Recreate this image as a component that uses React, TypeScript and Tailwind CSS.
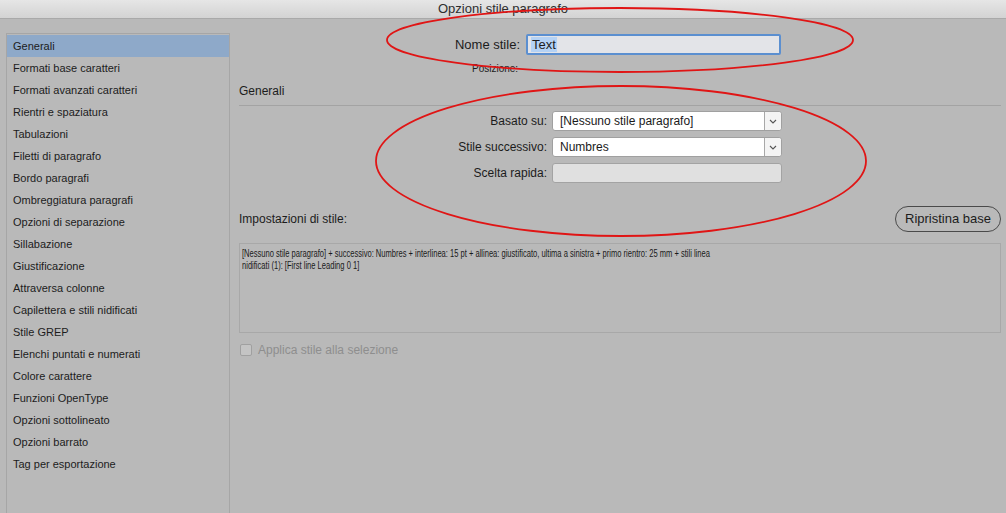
import React from "react";

const sections = [
  "Generali",
  "Formati base caratteri",
  "Formati avanzati caratteri",
  "Rientri e spaziatura",
  "Tabulazioni",
  "Filetti di paragrafo",
  "Bordo paragrafi",
  "Ombreggiatura paragrafi",
  "Opzioni di separazione",
  "Sillabazione",
  "Giustificazione",
  "Attraversa colonne",
  "Capilettera e stili nidificati",
  "Stile GREP",
  "Elenchi puntati e numerati",
  "Colore carattere",
  "Funzioni OpenType",
  "Opzioni sottolineato",
  "Opzioni barrato",
  "Tag per esportazione",
];

function Chevron() {
  return (
    <svg width="8" height="5" viewBox="0 0 8 5" className="text-[#555]">
      <path d="M1 1l3 3 3-3" fill="none" stroke="currentColor" strokeWidth="1.1" />
    </svg>
  );
}

function SelectBox({ value }: { value: string }) {
  return (
    <div className="flex h-[20px] w-[230px] items-stretch rounded-[3px] border border-[#a0a0a0] bg-white">
      <div className="flex flex-1 items-center pl-[7px] text-[12px] text-[#1a1a1a]">{value}</div>
      <div className="flex w-[17px] items-center justify-center rounded-r-[3px] border-l border-[#a8a8a8] bg-[#f4f4f4]">
        <Chevron />
      </div>
    </div>
  );
}

export default function App() {
  return (
    <div
      className="relative flex h-[513px] w-[1006px] flex-col overflow-hidden bg-[#b9b9b9] text-[#1c1c1c]"
      style={{ fontFamily: '"Liberation Sans", Arial, sans-serif' }}
    >
      {/* title bar */}
      <div className="flex h-[19px] shrink-0 items-center justify-center border-b border-[#a9a9a9] bg-gradient-to-b from-[#e6e6e6] to-[#d3d3d3] text-[13px] text-[#2e2e2e]">
        Opzioni stile paragrafo
      </div>

      <div className="flex flex-1 pl-[6px] pt-[14px] pr-[5px]">
        {/* sidebar */}
        <div className="w-[224px] shrink-0 border-l border-t border-r border-[#a6a6a6] pt-px">
          {sections.map((s, i) => (
            <div
              key={s}
              className={`flex h-[22px] items-center pl-[6px] text-[11px] ${
                i === 0 ? "bg-[#8ea9c9]" : ""
              }`}
            >
              {s}
            </div>
          ))}
        </div>

        {/* main */}
        <div className="ml-[9px] flex flex-1 flex-col">
          <div className="mt-px flex items-center">
            <div className="w-[281px] text-right text-[13px]">Nome stile:</div>
            <div className="ml-[6px] flex h-[21px] w-[255px] items-center rounded-[2px] border-2 border-[#5b8fd0] bg-[#e3e4e8] pl-[3px]">
              <span className="bg-[#b4d2f5] px-[1px] text-[13px] leading-[15px]">Text</span>
            </div>
          </div>
          <div className="mt-[8px] pl-[233px] text-[10px] leading-[12px]">Posizione:</div>

          <div className="mt-[9px] border-b border-[#a3a3a3] pb-[7px] text-[12px] leading-[14px]">Generali</div>

          <div className="mt-[5px] flex flex-col gap-[6px]">
            <div className="flex items-center">
              <div className="w-[308px] text-right text-[12px]">Basato su:</div>
              <div className="ml-[5px]">
                <SelectBox value="[Nessuno stile paragrafo]" />
              </div>
            </div>
            <div className="flex items-center">
              <div className="w-[308px] text-right text-[12px]">Stile successivo:</div>
              <div className="ml-[5px]">
                <SelectBox value="Numbres" />
              </div>
            </div>
            <div className="flex items-center">
              <div className="w-[308px] text-right text-[12px]">Scelta rapida:</div>
              <div className="ml-[5px] h-[20px] w-[230px] rounded-[3px] border border-[#a3a3a3] bg-[#e0e0e0]" />
            </div>
          </div>

          <div className="mt-[23px] flex items-center justify-between">
            <div className="text-[12px]">Impostazioni di stile:</div>
            <div className="flex h-[26px] items-center rounded-full border border-[#4a4a4a] px-[9px] text-[13px]">
              Ripristina base
            </div>
          </div>

          <div className="mt-[11px] h-[90px] overflow-hidden border border-[#a8a8a8] px-[2px] pt-[3px]">
            <div className="w-[138%] origin-top-left scale-x-[0.72] text-[10.5px] leading-[12px] whitespace-nowrap text-[#1a1a1a]">
              [Nessuno stile paragrafo] + successivo: Numbres + interlinea: 15 pt + allinea: giustificato, ultima a sinistra + primo rientro: 25 mm + stili linea
              <br />
              nidificati (1): [First line Leading 0 1]
            </div>
          </div>

          <div className="mt-[8px] flex items-center">
            <div className="ml-px h-[12px] w-[12px] rounded-[2px] border border-[#a0a0a0] bg-[#c4c4c4]" />
            <div className="ml-[6px] text-[12px] text-[#8e8e8e]">Applica stile alla selezione</div>
          </div>
        </div>
      </div>

      {/* annotations */}
      <svg className="pointer-events-none absolute left-0 top-0" width="1006" height="513">
        <ellipse cx="620" cy="40" rx="233" ry="32" fill="none" stroke="#e01515" strokeWidth="1.8" />
        <ellipse cx="621" cy="161" rx="245" ry="75" fill="none" stroke="#e01515" strokeWidth="1.8" />
      </svg>
    </div>
  );
}
